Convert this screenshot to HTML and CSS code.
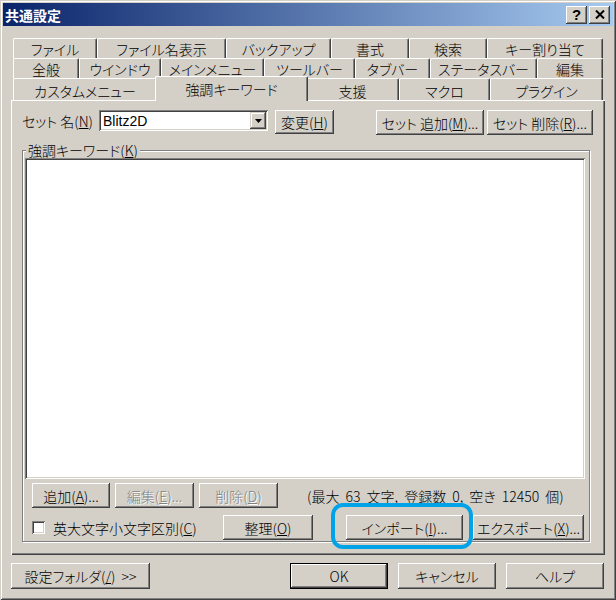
FILE: index.html
```html
<!DOCTYPE html>
<html lang="ja">
<head>
<meta charset="utf-8">
<title>共通設定</title>
<link rel="stylesheet" href="styles.css">
</head>
<body>
<div class="window">
  <div class="titlebar">
    <span class="title">共通設定</span>
    <div class="cbtns">
      <span class="cbtn help">?</span>
      <span class="cbtn close"><svg width="10" height="9" viewBox="0 0 10 9"><path d="M1 0.5 L9 8.5 M9 0.5 L1 8.5" stroke="#000" stroke-width="2" fill="none"/></svg></span>
    </div>
  </div>
  <div class="client">
    <div class="tabs">
      <div class="tabrow">
        <div class="tab w84">ファイル</div>
        <div class="tab w129">ファイル名表示</div>
        <div class="tab w105">バックアップ</div>
        <div class="tab w78">書式</div>
        <div class="tab w78">検索</div>
        <div class="tab w116">キー割り当て</div>
      </div>
      <div class="tabrow">
        <div class="tab w66">全般</div>
        <div class="tab w82">ウインドウ</div>
        <div class="tab w103">メインメニュー</div>
        <div class="tab w91">ツールバー</div>
        <div class="tab w75">タブバー</div>
        <div class="tab w107">ステータスバー</div>
        <div class="tab w66">編集</div>
      </div>
      <div class="tabrow front">
        <div class="tab w144">カスタムメニュー</div>
        <div class="tab sel w153">強調キーワード</div>
        <div class="tab w93">支援</div>
        <div class="tab w91">マクロ</div>
        <div class="tab w113">プラグイン</div>
      </div>
    </div>
    <div class="panel">
      <div class="setrow">
        <span class="setlabel">セット 名(<u>N</u>)</span>
        <div class="combo sunken">
          <span class="combo-text">Blitz2D</span>
          <span class="combo-btn raised"><svg width="7" height="4" viewBox="0 0 7 4"><path d="M0 0 H7 L3.5 4 Z" fill="#000"/></svg></span>
        </div>
        <span class="btn btn-change">変更(<u>H</u>)</span>
        <span class="btn btn-setadd">セット 追加(<u>M</u>)...</span>
        <span class="btn btn-setdel">セット 削除(<u>R</u>)...</span>
      </div>
      <fieldset class="group">
        <legend>強調キーワード(<u>K</u>)</legend>
        <div class="group-body">
          <div class="listbox sunken"></div>
          <div class="grow row1">
            <span class="btn btn-add">追加(<u>A</u>)...</span>
            <span class="btn disabled btn-edit">編集(<u>E</u>)...</span>
            <span class="btn disabled btn-del">削除(<u>D</u>)</span>
            <span class="count">(最大 63 文字, 登録数 0, 空き 12450 個)</span>
          </div>
          <div class="grow row2">
            <span class="check sunken"></span>
            <span class="checklabel">英大文字小文字区別(<u>C</u>)</span>
            <span class="btn btn-organize">整理(<u>O</u>)</span>
            <span class="btn btn-import">インポート(<u>I</u>)...</span>
            <span class="btn btn-export">エクスポート(<u>X</u>)...</span>
          </div>
        </div>
      </fieldset>
    </div>
    <div class="footer">
      <span class="btn btn-folder">設定フォルダ(<u>/</u>) &gt;&gt;</span>
      <div class="footer-right">
        <span class="btn default">OK</span>
        <span class="btn">キャンセル</span>
        <span class="btn">ヘルプ</span>
      </div>
    </div>
  </div>
  <div class="highlight"></div>
</div>
</body>
</html>
```
FILE: styles.css
```css
* { box-sizing: border-box; }
html, body { margin: 0; padding: 0; }
body {
  width: 616px;
  height: 600px;
  overflow: hidden;
  background: #d4d0c8;
  font-family: "Noto Sans CJK JP", sans-serif;
  font-size: 14px;
  font-weight: 300;
  line-height: 16px;
  color: #000;
  font-feature-settings: "palt";
}
u { text-decoration: underline; text-underline-offset: 1px; }

.window {
  position: relative;
  width: 616px;
  height: 600px;
  padding: 3px;
  display: flex;
  flex-direction: column;
  background: #d4d0c8;
  box-shadow: inset 1px 1px #d4d0c8, inset -1px -1px #404040, inset 2px 2px #fff, inset -2px -2px #808080;
}

.titlebar {
  flex: none;
  height: 23px;
  display: flex;
  align-items: center;
  padding: 0 3px 0 2px;
  background: linear-gradient(to right, #0a246a, #a6caf0);
}
.title {
  flex: 1;
  color: #fff;
  font-weight: bold;
  font-size: 14px;
  line-height: 16px;
}
.cbtns { display: flex; gap: 2px; }
.cbtn {
  width: 21px;
  height: 18px;
  display: flex;
  align-items: center;
  justify-content: center;
  background: #d4d0c8;
  box-shadow: inset -1px -1px #404040, inset 1px 1px #fff, inset -2px -2px #808080;
}
.cbtn.help {
  font-family: "Liberation Sans", sans-serif;
  font-weight: bold;
  font-size: 15px;
  line-height: 15px;
}

.client {
  flex: 1;
  display: flex;
  flex-direction: column;
  padding: 12px 8px 0;
}

.tabs { margin: 0 2px; }
.tabrow { display: flex; height: 20px; }
.tabrow.front { height: 22px; }
.tab {
  flex: none;
  display: flex;
  align-items: center;
  justify-content: center;
  white-space: nowrap;
  background: #d4d0c8;
  border-top: 1px solid #fff;
  border-left: 1px solid #fff;
  border-right: 1px solid #404040;
  border-top-left-radius: 2px;
  border-top-right-radius: 2px;
  box-shadow: inset -1px 0 #808080;
}
.front .tab { padding-top: 3px; }
.tab.sel {
  align-self: flex-start;
  height: 25px;
  margin: -2px -2px -1px;
  padding-top: 0;
  position: relative;
  z-index: 1;
}
.w66 { width: 66px; }
.w75 { width: 75px; }
.w78 { width: 78px; }
.w82 { width: 82px; }
.w84 { width: 84px; }
.w91 { width: 91px; }
.w93 { width: 93px; }
.w103 { width: 103px; }
.w105 { width: 105px; }
.w107 { width: 107px; }
.w113 { width: 113px; }
.w116 { width: 116px; }
.w129 { width: 129px; }
.w144 { width: 144px; }
.w153 { width: 153px; }

.panel {
  flex: none;
  height: 455px;
  display: flex;
  flex-direction: column;
  padding: 9px 12px 0 10px;
  border-top: 1px solid #fff;
  border-left: 1px solid #fff;
  box-shadow: inset -1px -1px #404040, inset -2px -2px #808080;
}

.btn {
  flex: none;
  display: flex;
  align-items: center;
  justify-content: center;
  height: 25px;
  white-space: nowrap;
  background: #d4d0c8;
  box-shadow: inset -1px -1px #404040, inset 1px 1px #fff, inset -2px -2px #808080;
}
.btn.default { border: 1px solid #000; }
.btn.disabled { color: #808080; text-shadow: 1px 1px #fff; }

.sunken {
  background: #fff;
  box-shadow: inset 1px 1px #808080, inset -1px -1px #fff, inset 2px 2px #404040, inset -2px -2px #d4d0c8;
}
.raised {
  background: #d4d0c8;
  box-shadow: inset -1px -1px #404040, inset 1px 1px #d4d0c8, inset -2px -2px #808080, inset 2px 2px #fff;
}

.setrow { display: flex; align-items: flex-start; height: 25px; flex: none; }
.setlabel { width: 77px; height: 21px; display: flex; align-items: center; white-space: nowrap; }
.combo {
  width: 169px;
  height: 21px;
  display: flex;
  align-items: center;
  padding: 2px;
}
.combo-text {
  flex: 1;
  padding-left: 2px;
  font-family: "Liberation Sans", sans-serif;
  font-weight: normal;
  font-size: 14px;
}
.combo-btn {
  width: 16px;
  height: 17px;
  display: flex;
  align-items: center;
  justify-content: center;
}
.btn-change { margin-left: 7px; width: 59px; height: 24px; }
.btn-setadd { margin-left: auto; width: 108px; }
.btn-setdel { margin-left: 3px; width: 106px; }

.group {
  flex: none;
  margin: 7px 0 0;
  padding: 0 2px 1px;
  width: 568px;
  min-width: 0;
  border: 1px solid #808080;
  box-shadow: inset 1px 1px #fff, 1px 1px #fff;
}
.group legend {
  margin-left: 1px;
  padding: 0 2px;
  line-height: 16px;
  background: #d4d0c8;
}
.group-body { display: flex; flex-direction: column; }
.listbox { width: 560px; height: 321px; }
.grow { display: flex; align-items: center; height: 25px; padding-left: 7px; }
.row1 { margin-top: 4px; }
.row2 { margin-top: 7px; }
.btn-add { width: 78px; }
.btn-edit { margin-left: 5px; width: 79px; }
.btn-del { margin-left: 5px; width: 79px; }
.count { margin-left: 29px; white-space: nowrap; word-spacing: 3px; }
.check { width: 13px; height: 13px; flex: none; }
.checklabel { margin-left: 8px; width: 170px; white-space: nowrap; }
.btn-organize { width: 90px; }
.btn-import { margin-left: 33px; width: 117px; }
.btn-export { margin-left: 10px; width: 111px; }

.footer { display: flex; margin-top: 8px; height: 26px; flex: none; }
.btn-folder { width: 139px; height: 26px; word-spacing: 3px; }
.footer-right { margin-left: auto; margin-right: 1px; display: flex; gap: 10px; }
.footer-right .btn { width: 98px; height: 26px; }

.highlight {
  position: absolute;
  left: 331px;
  top: 503px;
  width: 142px;
  height: 46px;
  border: 4px solid #00a2e8;
  border-radius: 12px;
}
```
